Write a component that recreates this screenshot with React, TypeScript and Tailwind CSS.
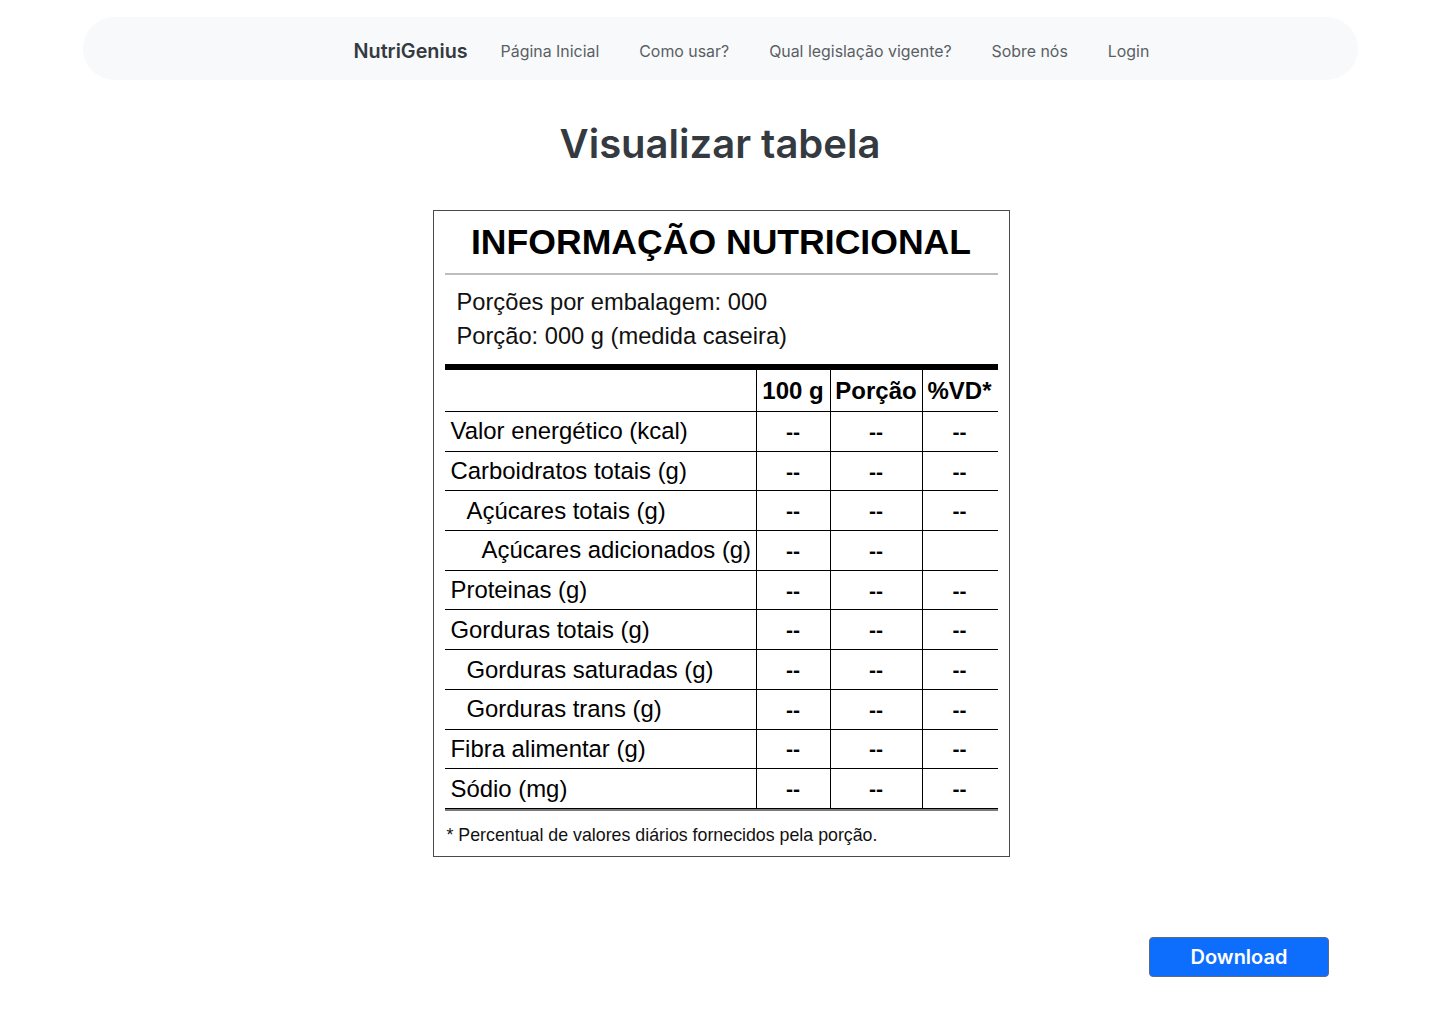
import React from 'react';

type Row = { label: string; indent: 0 | 1 | 2; vd: boolean };

const rows: Row[] = [
    { label: 'Valor energético (kcal)', indent: 0, vd: true },
    { label: 'Carboidratos totais (g)', indent: 0, vd: true },
    { label: 'Açúcares totais (g)', indent: 1, vd: true },
    { label: 'Açúcares adicionados (g)', indent: 2, vd: false },
    { label: 'Proteinas (g)', indent: 0, vd: true },
    { label: 'Gorduras totais (g)', indent: 0, vd: true },
    { label: 'Gorduras saturadas (g)', indent: 1, vd: true },
    { label: 'Gorduras trans (g)', indent: 1, vd: true },
    { label: 'Fibra alimentar (g)', indent: 0, vd: true },
    { label: 'Sódio (mg)', indent: 0, vd: true },
];

const indentClass = ['pl-[6px]', 'pl-[22px]', 'pl-[37px]'];

const links = ['Página Inicial', 'Como usar?', 'Qual legislação vigente?', 'Sobre nós', 'Login'];

function NavBar() {
    return (
        <nav className="mx-auto mt-[17px] flex h-[63px] w-[1275px] items-center rounded-[32px] bg-[#f8f9fa] pl-[271px] pt-[7px]">
            <span className="mr-[33px] text-[19.8px] font-semibold text-[#343a40]">NutriGenius</span>
            <ul className="flex items-center gap-[40px]">
                {links.map((l) => (
                    <li key={l} className="text-[15.9px] text-[#5a5f64]">
                        {l}
                    </li>
                ))}
            </ul>
        </nav>
    );
}

function Dash() {
    return <span className="text-[21px] font-bold leading-none text-black">--</span>;
}

function NutritionTable() {
    return (
        <div
            className="mx-auto w-[577px] translate-x-[1px] border border-[#4a4a4a] px-[11px] text-black"
            style={{ fontFamily: '"Liberation Sans", Arial, sans-serif' }}
        >
            {/* Heading */}
            <div className="flex h-[64px] items-center justify-center border-b-2 border-[#bdbdbd]">
                <h2 className="pt-[2px] text-[35.6px] font-bold leading-none">INFORMAÇÃO NUTRICIONAL</h2>
            </div>

            {/* Serving info */}
            <div className="pb-[11px] pl-[12px] pt-[10px] text-[23.7px] leading-[34px] text-[#111]">
                <p>Porções por embalagem: 000</p>
                <p>Porção: 000 g (medida caseira)</p>
            </div>
            <div className="h-[6px] bg-black" />

            {/* Header row */}
            <div className="grid h-[41px] grid-cols-[311px_74px_92px_75px] text-[24px] font-bold">
                <div />
                <div className="flex items-center justify-center border-l border-black">100 g</div>
                <div className="flex items-center justify-center border-l border-black">Porção</div>
                <div className="flex items-center justify-center border-l border-black">%VD*</div>
            </div>

            {/* Body rows */}
            {rows.map((r) => (
                <div
                    key={r.label}
                    className="grid h-[39.7px] grid-cols-[311px_74px_92px_75px] border-t border-black text-[23.9px]"
                >
                    <div className={`flex items-center ${indentClass[r.indent]}`}>{r.label}</div>
                    <div className="flex items-center justify-center border-l border-black">
                        <Dash />
                    </div>
                    <div className="flex items-center justify-center border-l border-black">
                        <Dash />
                    </div>
                    <div className="flex items-center justify-center border-l border-black">
                        {r.vd && <Dash />}
                    </div>
                </div>
            ))}
            <div className="h-px bg-black" />
            <div className="h-[2px] bg-[#7a7a7a]" />

            {/* Footnote */}
            <p className="flex h-[45px] items-center pl-[2px] pt-[3px] text-[17.8px] text-[#111]">
                * Percentual de valores diários fornecidos pela porção.
            </p>
        </div>
    );
}

export default function App() {
    return (
        <div
            className="min-h-[1024px] bg-white pb-[40px]"
            style={{ fontFamily: 'Inter, "Noto Sans", sans-serif' }}
        >
            <NavBar />

            <h1 className="mt-[40px] text-center text-[40px] font-semibold leading-[48px] text-[#343a40]">
                Visualizar tabela
            </h1>

            <div className="mt-[42px]">
                <NutritionTable />
            </div>

            <div className="mt-[80px] flex justify-end pr-[111px]">
                <button className="h-[40px] w-[180px] rounded-[4px] border border-[#5a6b84] bg-[#0d6efd] text-[20px] font-semibold text-white">
                    Download
                </button>
            </div>
        </div>
    );
}
